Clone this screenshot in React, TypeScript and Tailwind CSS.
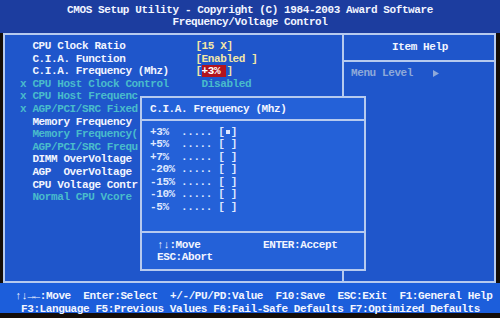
import React from "react"

type Row = { mark?: boolean; name: string; value?: React.ReactNode; dim?: boolean }

const rows: Row[] = [
  { name: "CPU Clock Ratio", value: <span className="text-[#f3e7a6]">[15 X]</span> },
  { name: "C.I.A. Function", value: <span className="text-[#f3e7a6]">[Enabled ]</span> },
  {
    name: "C.I.A. Frequency (Mhz)",
    value: (
      <span className="text-[#f3e7a6]">
        [<span className="bg-[#b3141d] text-white">+3% </span>]
      </span>
    ),
  },
  { mark: true, dim: true, name: "CPU Host Clock Control", value: <span className="text-[#49bccb]"> Disabled</span> },
  { mark: true, dim: true, name: "CPU Host Frequenc" },
  { mark: true, dim: true, name: "AGP/PCI/SRC Fixed" },
  { name: "Memory Frequency" },
  { dim: true, name: "Memory Frequency(" },
  { dim: true, name: "AGP/PCI/SRC Frequ" },
  { name: "DIMM OverVoltage" },
  { name: "AGP  OverVoltage" },
  { name: "CPU Voltage Contr" },
  { dim: true, name: "Normal CPU Vcore" },
]

const options = ["+3%", "+5%", "+7%", "-20%", "-15%", "-10%", "-5%"]

export default function App() {
  return (
    <div className="w-[500px] h-[318px] bg-[#140d08] overflow-hidden flex flex-col font-['Liberation_Mono','DejaVu_Sans_Mono',monospace] font-bold text-[11px] tracking-[-0.4px] leading-[12.6px] text-[#f2f5ff] whitespace-pre">
      {/* title */}
      <div className="h-[33px] bg-[#1c3d9f] flex flex-col items-center pt-[3.5px]">
        <div>CMOS Setup Utility - Copyright (C) 1984-2003 Award Software</div>
        <div>Frequency/Voltage Control</div>
      </div>

      {/* main frame */}
      <div className="relative ml-[3px] w-[493px] h-[250px] bg-[#1f56cb] border-2 border-[#b6caef] flex">
        <div className="w-[339px] h-full border-r-2 border-[#b6caef] pt-[5px] pl-[15px] flex flex-col">
          {rows.map((r, i) => (
            <div key={i} className="flex h-[12.6px]">
              <span className="w-[12.4px] text-[#49bccb]">{r.mark ? "x" : ""}</span>
              <span className={`w-[163px] overflow-hidden ${r.dim ? "text-[#49bccb]" : "text-[#f2f5ff]"}`}>{r.name}</span>
              {r.value}
            </div>
          ))}
        </div>
        <div className="flex-1 flex flex-col">
          <div className="h-[27px] border-b-2 border-[#b6caef] flex items-center justify-center pl-[2px]">Item Help</div>
          <div className="pl-[7px] pt-[5px] flex items-center text-[#8ea9d9]">
            <span>Menu Level   </span>
            <svg width="6" height="7" viewBox="0 0 6 7" className="ml-[1px]">
              <path d="M0 0 L6 3.5 L0 7 Z" fill="#8ea9d9" />
            </svg>
          </div>
        </div>

        {/* popup */}
        <div className="absolute left-[135px] top-[61px] w-[226px] h-[175px] bg-[#2461d8] border-2 border-[#b6caef] flex flex-col">
          <div className="h-[23px] border-b-2 border-[#b6caef] pt-[5px] pl-[8px]">C.I.A. Frequency (Mhz)</div>
          <div className="pt-[4.5px] pl-[8px] h-[112px] border-b-2 border-[#b6caef] text-[#dfe8ff]">
            {options.map((o, i) => (
              <div key={o} className="flex h-[12.6px]">
                <span>{o.padEnd(5, " ")}..... [</span>
                <span className="w-[6.2px] flex items-center justify-center">
                  {i === 0 ? <span className="w-[4px] h-[4px] bg-[#dfe8ff]" /> : null}
                </span>
                <span>]</span>
              </div>
            ))}
          </div>
          <div className="pt-[5.5px] pl-[15px] flex flex-col">
            <div className="flex">
              <span className="w-[106px]">↑↓:Move</span>
              <span>ENTER:Accept</span>
            </div>
            <div>ESC:Abort</div>
          </div>
        </div>
      </div>

      {/* key bar */}
      <div className="h-[30px] bg-[#1c5edb] pt-[7px] flex flex-col">
        <div className="pl-[15px]">↑↓→←:Move  Enter:Select  +/-/PU/PD:Value  F10:Save  ESC:Exit  F1:General Help</div>
        <div className="pl-[21px]">F3:Language F5:Previous Values F6:Fail-Safe Defaults F7:Optimized Defaults</div>
      </div>
    </div>
  )
}
